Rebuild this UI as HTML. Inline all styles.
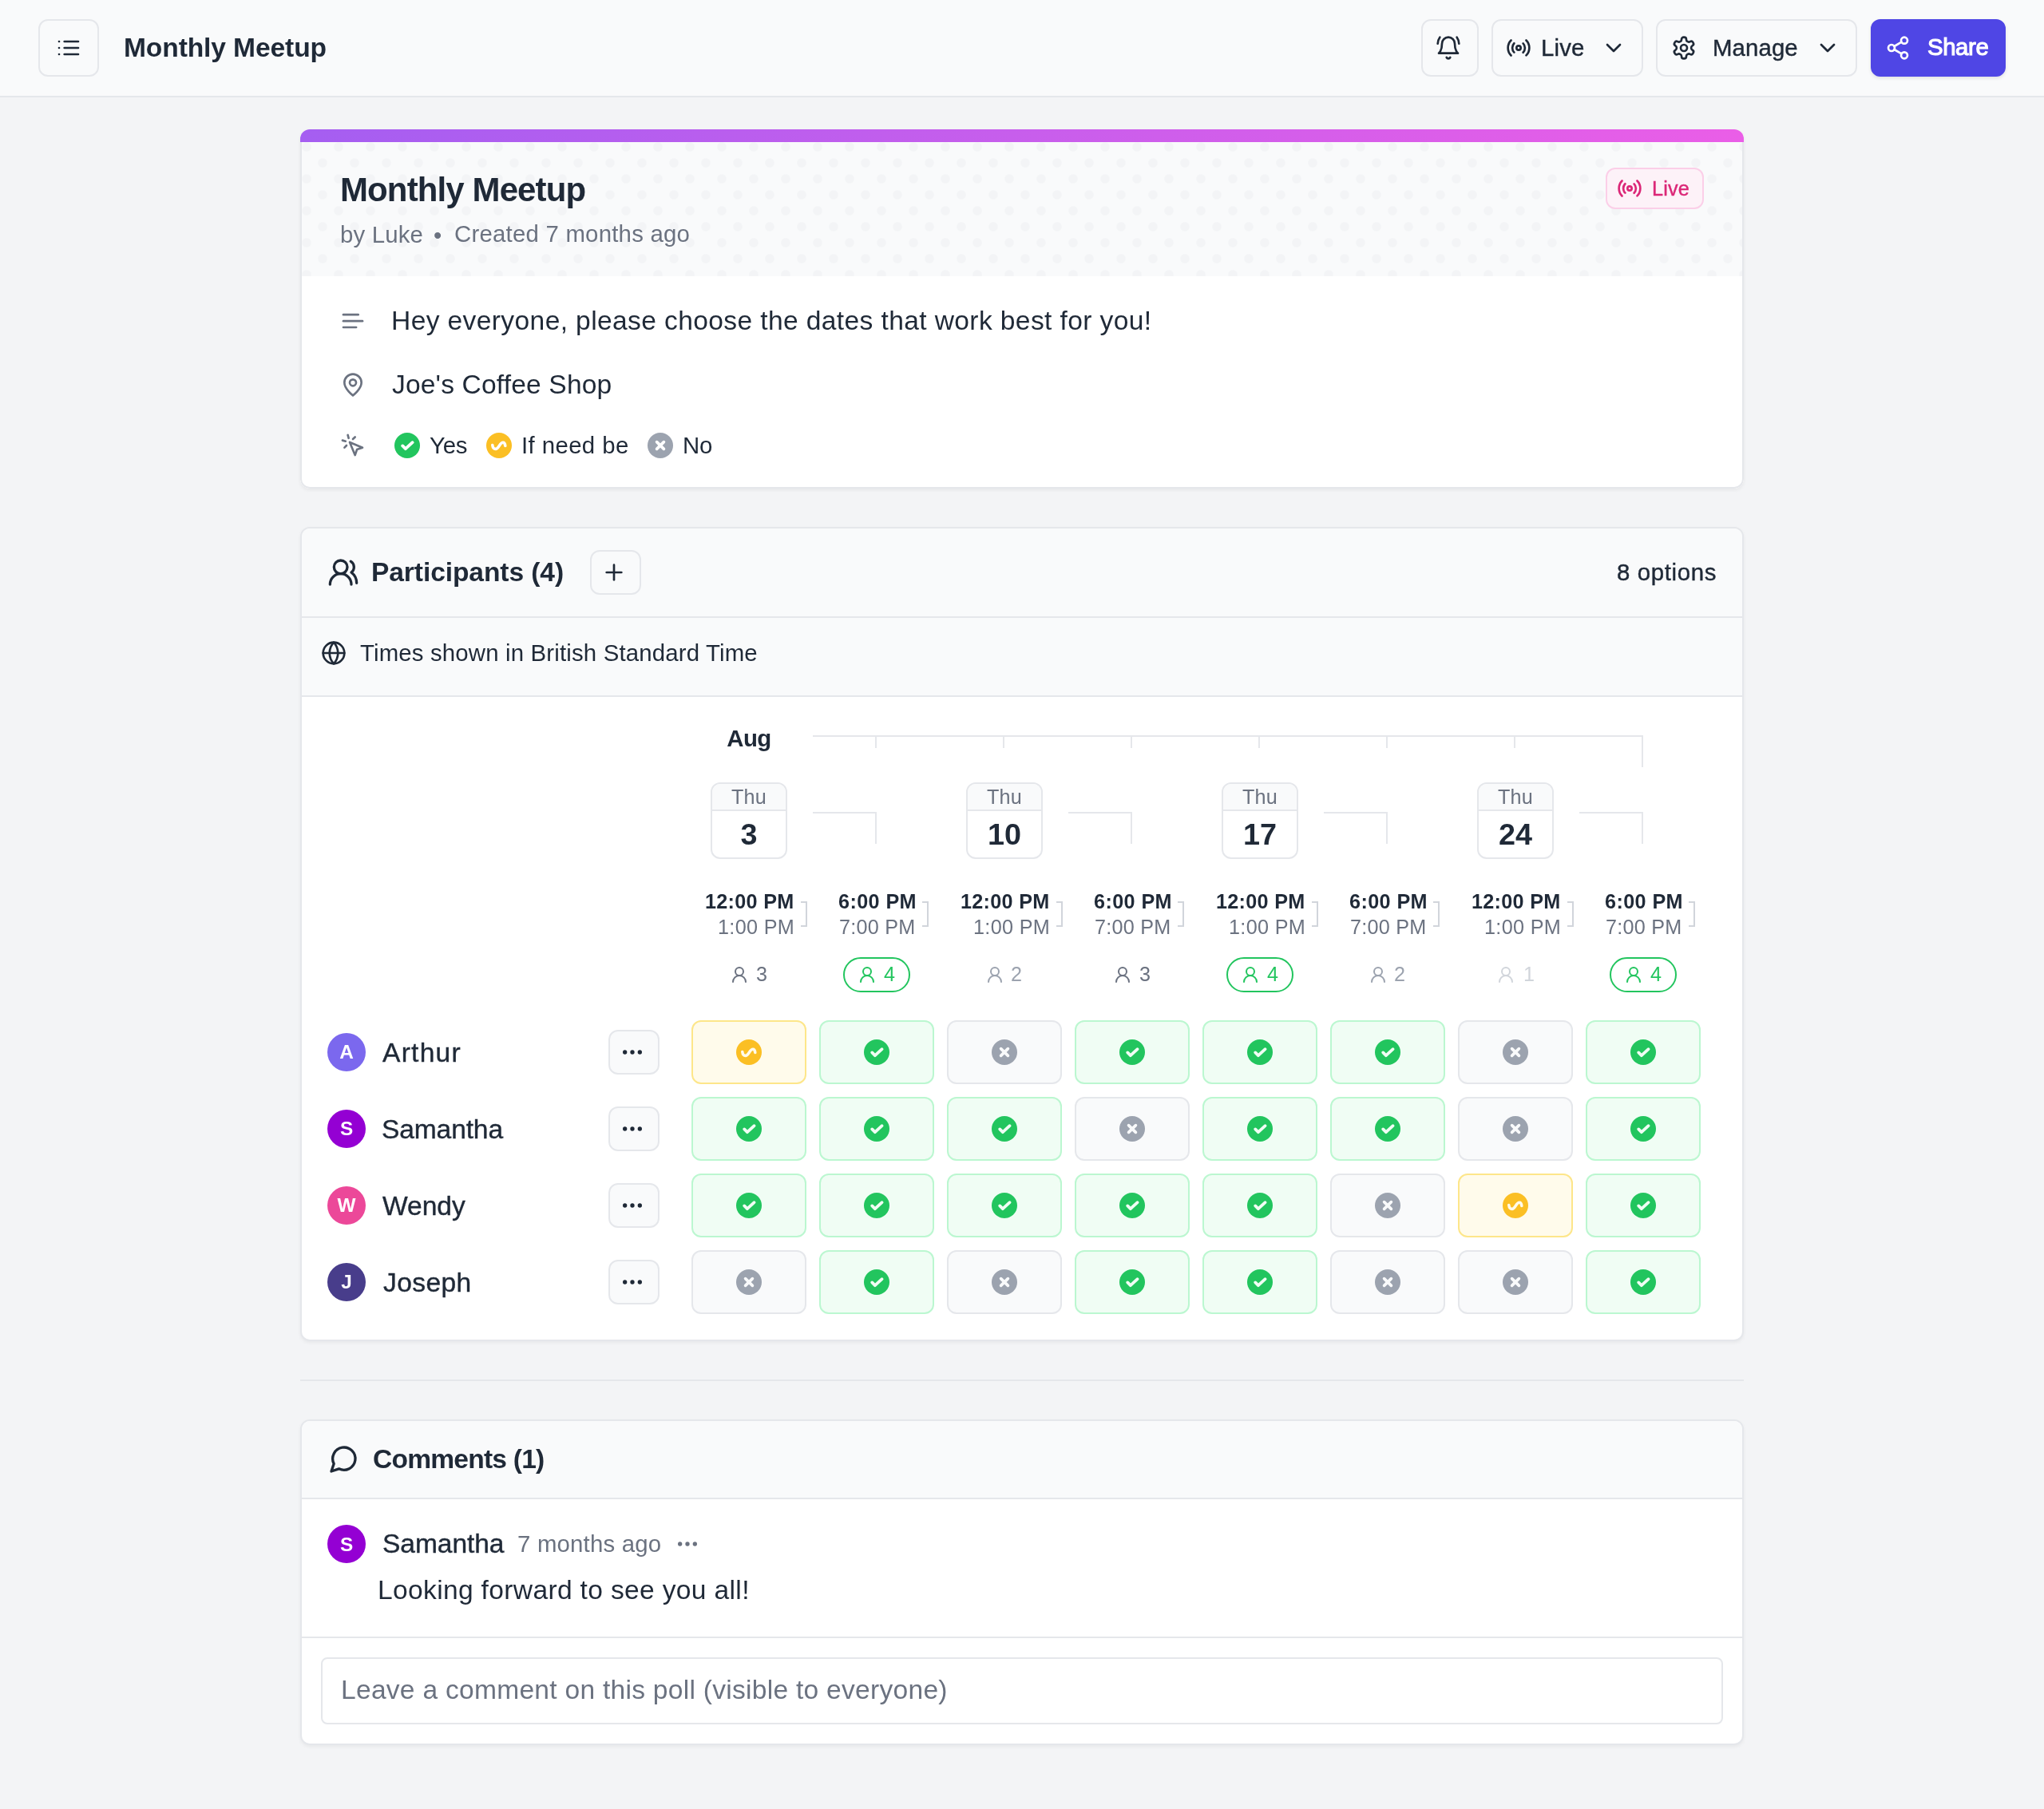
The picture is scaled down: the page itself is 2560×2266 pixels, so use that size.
<!DOCTYPE html><html lang="en"><head><meta charset="utf-8"><title>Monthly Meetup</title><style>
*{box-sizing:border-box}
html,body{margin:0;padding:0}
body{width:2560px;height:2266px;overflow:hidden;background:#f3f4f6;font-family:"Liberation Sans",sans-serif;color:#1f2937;position:relative}
.a{position:absolute}
svg{display:block}
.t{position:absolute;white-space:nowrap;line-height:1;will-change:transform}
.b{font-weight:bold}
.g5{color:#6b7280}
.m{-webkit-text-stroke:0.4px currentColor}
.sb{-webkit-text-stroke:1.1px currentColor}
.box{position:absolute;border:2px solid #e5e7eb;border-radius:12px;background:#f9fafb}
.cell{position:absolute;width:144px;height:80px;border:2px solid;border-radius:12px}
.cy{background:#f0fdf4;border-color:#bbf7d0}
.ci{background:#fffbeb;border-color:#fde68a}
.cn{background:#f9fafb;border-color:#e5e7eb}
.av{position:absolute;width:48px;height:48px;border-radius:50%}
.ln{position:absolute;background:#e5e7eb}
</style></head><body>
<div class="a" style="left:0;top:0;width:2560px;height:122px;background:#f9fafb;border-bottom:2px solid #e5e7eb"></div>
<div class="box" style="left:48px;top:24px;width:76px;height:72px;"></div>
<div class="a" style="left:70px;top:44px;color:#1f2937"><svg width="32" height="32" viewBox="0 0 24 24" fill="none" stroke="currentColor" stroke-width="2" stroke-linecap="round" stroke-linejoin="round"><line x1="8" x2="21" y1="6" y2="6"/><line x1="8" x2="21" y1="12" y2="12"/><line x1="8" x2="21" y1="18" y2="18"/><line x1="3" x2="3.01" y1="6" y2="6"/><line x1="3" x2="3.01" y1="12" y2="12"/><line x1="3" x2="3.01" y1="18" y2="18"/></svg></div>
<div class="t b" id="htitle" style="left:155px;top:42.5px;font-size:33.6px;letter-spacing:-0.115px;">Monthly Meetup</div>
<div class="box" style="left:1780px;top:24px;width:72px;height:72px;"></div>
<div class="a" style="left:1798px;top:44px;color:#1f2937"><svg width="32" height="32" viewBox="0 0 24 24" fill="none" stroke="currentColor" stroke-width="2" stroke-linecap="round" stroke-linejoin="round"><path d="M6 8a6 6 0 0 1 12 0c0 7 3 9 3 9H3s3-2 3-9"/><path d="M10.3 21a1.94 1.94 0 0 0 3.4 0"/><path d="M4 2C2.8 3.7 2 5.7 2 8"/><path d="M22 8c0-2.3-.8-4.3-2-6"/></svg></div>
<div class="box" style="left:1868px;top:24px;width:190px;height:72px;"></div>
<div class="a" style="left:1886px;top:44px;color:#1f2937"><svg width="32" height="32" viewBox="0 0 24 24" fill="none" stroke="currentColor" stroke-width="2" stroke-linecap="round" stroke-linejoin="round"><path d="M4.9 19.1C1 15.2 1 8.8 4.9 4.9"/><path d="M7.8 16.2c-2.3-2.3-2.3-6.1 0-8.5"/><circle cx="12" cy="12" r="2"/><path d="M16.2 7.8c2.3 2.3 2.3 6.1 0 8.5"/><path d="M19.1 4.9C23 8.8 23 15.1 19.1 19"/></svg></div>
<div class="t m" id="blive" style="left:1930px;top:44.6px;font-size:29.4px;letter-spacing:0.167px;">Live</div>
<div class="a" style="left:2005px;top:44px;color:#1f2937"><svg width="32" height="32" viewBox="0 0 24 24" fill="none" stroke="currentColor" stroke-width="2" stroke-linecap="round" stroke-linejoin="round"><path d="m6 9 6 6 6-6"/></svg></div>
<div class="box" style="left:2074px;top:24px;width:252px;height:72px;"></div>
<div class="a" style="left:2093px;top:44px;color:#1f2937"><svg width="32" height="32" viewBox="0 0 24 24" fill="none" stroke="currentColor" stroke-width="2" stroke-linecap="round" stroke-linejoin="round"><path d="M12.22 2h-.44a2 2 0 0 0-2 2v.18a2 2 0 0 1-1 1.73l-.43.25a2 2 0 0 1-2 0l-.15-.08a2 2 0 0 0-2.73.73l-.22.38a2 2 0 0 0 .73 2.73l.15.1a2 2 0 0 1 1 1.72v.51a2 2 0 0 1-1 1.74l-.15.09a2 2 0 0 0-.73 2.73l.22.38a2 2 0 0 0 2.73.73l.15-.08a2 2 0 0 1 2 0l.43.25a2 2 0 0 1 1 1.73V20a2 2 0 0 0 2 2h.44a2 2 0 0 0 2-2v-.18a2 2 0 0 1 1-1.73l.43-.25a2 2 0 0 1 2 0l.15.08a2 2 0 0 0 2.73-.73l.22-.39a2 2 0 0 0-.73-2.73l-.15-.08a2 2 0 0 1-1-1.74v-.5a2 2 0 0 1 1-1.74l.15-.09a2 2 0 0 0 .73-2.73l-.22-.38a2 2 0 0 0-2.73-.73l-.15.08a2 2 0 0 1-2 0l-.43-.25a2 2 0 0 1-1-1.73V4a2 2 0 0 0-2-2z"/><circle cx="12" cy="12" r="3"/></svg></div>
<div class="t m" id="bman" style="left:2145px;top:44.6px;font-size:29.4px;letter-spacing:0.1px;">Manage</div>
<div class="a" style="left:2273px;top:44px;color:#1f2937"><svg width="32" height="32" viewBox="0 0 24 24" fill="none" stroke="currentColor" stroke-width="2" stroke-linecap="round" stroke-linejoin="round"><path d="m6 9 6 6 6-6"/></svg></div>
<div class="box" style="left:2343px;top:24px;width:169px;height:72px;background:#4f46e5;border-color:#4f46e5;box-shadow:0 2px 4px rgba(0,0,0,.1)"></div>
<div class="a" style="left:2361px;top:44px;color:#fff"><svg width="32" height="32" viewBox="0 0 24 24" fill="none" stroke="currentColor" stroke-width="2" stroke-linecap="round" stroke-linejoin="round"><circle cx="18" cy="5" r="3"/><circle cx="6" cy="12" r="3"/><circle cx="18" cy="19" r="3"/><line x1="8.59" x2="15.42" y1="13.51" y2="17.49"/><line x1="15.41" x2="8.59" y1="6.51" y2="10.49"/></svg></div>
<div class="t sb" id="bshare" style="left:2413.8px;top:44px;font-size:29.4px;letter-spacing:-0.425px;color:#fff">Share</div>
<div class="a" style="left:376px;top:162px;width:1808px;height:450px;border-radius:12px;overflow:hidden;background:#fff;box-shadow:0 2px 4px rgba(0,0,0,.06)"><div class="a" style="left:0;top:0;width:1808px;height:16px;background:linear-gradient(90deg,#a55ef1,#ea5ee7)"></div><div class="a" style="left:0;top:16px;width:1808px;height:434px;border:2px solid #e5e7eb;border-top:0;border-radius:0 0 12px 12px"></div><div class="a" style="left:2px;top:16px;width:1804px;height:168px;background-color:#f9fafb;background-image:radial-gradient(circle at 6px 6px,#f3f4f6 5px,rgba(243,244,246,0) 6.5px),radial-gradient(circle at 26px 26px,#f3f4f6 5px,rgba(243,244,246,0) 6.5px);background-size:40px 40px"></div></div>
<div class="t b" id="ctitle" style="left:425.5px;top:217px;font-size:42px;letter-spacing:-0.886px;">Monthly Meetup</div>
<div class="t g5" id="csub1" style="left:426px;top:279px;font-size:29.4px;letter-spacing:0.167px;">by Luke</div>
<div class="t g5" id="csubd" style="left:543px;top:280px;font-size:29.4px;letter-spacing:0px;">•</div>
<div class="t g5" id="csub2" style="left:568.8px;top:278.4px;font-size:29.4px;letter-spacing:0.216px;">Created 7 months ago</div>
<div class="box" style="left:2011px;top:210px;width:123px;height:52px;border-color:#fbcfe8;border-radius:12px;background:#fdf2f8"></div>
<div class="a" style="left:2024.5px;top:220px;color:#db2777"><svg width="32" height="32" viewBox="0 0 24 24" fill="none" stroke="currentColor" stroke-width="2" stroke-linecap="round" stroke-linejoin="round"><path d="M4.9 19.1C1 15.2 1 8.8 4.9 4.9"/><path d="M7.8 16.2c-2.3-2.3-2.3-6.1 0-8.5"/><circle cx="12" cy="12" r="2"/><path d="M16.2 7.8c2.3 2.3 2.3 6.1 0 8.5"/><path d="M19.1 4.9C23 8.8 23 15.1 19.1 19"/></svg></div>
<div class="t m" id="badge" style="left:2069.3px;top:224px;font-size:25.2px;letter-spacing:0.166px;color:#db2777">Live</div>
<div class="a" style="left:426px;top:386px;color:#6b7280"><svg width="32" height="32" viewBox="0 0 24 24" fill="none" stroke="currentColor" stroke-width="2" stroke-linecap="round" stroke-linejoin="round"><path d="M17 6.1H3"/><path d="M21 12.1H3"/><path d="M15.1 18H3"/></svg></div>
<div class="t " id="desc" style="left:489.5px;top:385px;font-size:33.6px;letter-spacing:0.376px;">Hey everyone, please choose the dates that work best for you!</div>
<div class="a" style="left:426px;top:466px;color:#6b7280"><svg width="32" height="32" viewBox="0 0 24 24" fill="none" stroke="currentColor" stroke-width="2" stroke-linecap="round" stroke-linejoin="round"><path d="M20 10c0 6-8 12-8 12s-8-6-8-12a8 8 0 0 1 16 0Z"/><circle cx="12" cy="10" r="3"/></svg></div>
<div class="t " id="loc" style="left:491px;top:465px;font-size:33.6px;letter-spacing:0.157px;">Joe's Coffee Shop</div>
<div class="a" style="left:426px;top:542px;color:#6b7280"><svg width="32" height="32" viewBox="0 0 24 24" fill="none" stroke="currentColor" stroke-width="2" stroke-linecap="round" stroke-linejoin="round"><path d="m9 9 5 12 1.8-5.2L21 14Z"/><path d="M7.2 2.2 8 5.1"/><path d="m5.1 8-2.9-.8"/><path d="M14 4.1 12 6"/><path d="m6 12-1.9 2"/></svg></div>
<div class="a" style="left:494px;top:542px"><svg width="32" height="32" viewBox="0 0 32 32"><circle cx="16" cy="16" r="16" fill="#22c55e"/><path d="M10.2 16.4L13.9 20.2L22.6 12.2" fill="none" stroke="#fff" stroke-width="3.8" stroke-linecap="round" stroke-linejoin="round"/></svg></div>
<div class="t " id="lyes" style="left:538px;top:542.5px;font-size:29.4px;letter-spacing:-0.2px;">Yes</div>
<div class="a" style="left:609px;top:542px"><svg width="32" height="32" viewBox="0 0 32 32"><circle cx="16" cy="16" r="16" fill="#fbbf24"/><path d="M7.8 15.6C8.2 19 10 20.4 11.8 20.4C15.5 20.4 17 12.2 21 12.2C22.8 12.2 23.6 14.5 23.8 16.4" fill="none" stroke="#fff" stroke-width="3.6" stroke-linecap="round" stroke-linejoin="round"/></svg></div>
<div class="t " id="linb" style="left:652.5px;top:542.5px;font-size:29.4px;letter-spacing:0.39px;">If need be</div>
<div class="a" style="left:811px;top:542px"><svg width="32" height="32" viewBox="0 0 32 32"><circle cx="16" cy="16" r="16" fill="#9ca3af"/><path d="M11.6 11.6L20.4 20.4M20.4 11.6L11.6 20.4" fill="none" stroke="#fff" stroke-width="3.7" stroke-linecap="round"/></svg></div>
<div class="t " id="lno" style="left:854.6px;top:542.5px;font-size:29.4px;letter-spacing:-0.2px;">No</div>
<div class="a" style="left:376px;top:660px;width:1808px;height:1020px;border:2px solid #e5e7eb;border-radius:12px;overflow:hidden;background:#fff;box-shadow:0 2px 4px rgba(0,0,0,.05)"><div class="a" style="left:0;top:0;width:1804px;height:112px;background:#f9fafb;border-bottom:2px solid #e5e7eb"></div><div class="a" style="left:0;top:112px;width:1804px;height:99px;background:#f9fafb;border-bottom:2px solid #e5e7eb"></div></div>
<div class="a" style="left:410px;top:697px;color:#1f2937"><svg width="40" height="40" viewBox="0 0 24 24" fill="none" stroke="currentColor" stroke-width="2" stroke-linecap="round" stroke-linejoin="round"><path d="M18 21a8 8 0 0 0-16 0"/><circle cx="10" cy="8" r="5"/><path d="M22 20c0-3.37-2-6.5-4-8a5 5 0 0 0-.45-8.3"/></svg></div>
<div class="t b" id="ptitle" style="left:465px;top:700px;font-size:33.6px;letter-spacing:-0.101px;">Participants (4)</div>
<div class="box" style="left:739px;top:689px;width:64px;height:56px;"></div>
<div class="a" style="left:753px;top:701px;color:#1f2937"><svg width="32" height="32" viewBox="0 0 24 24" fill="none" stroke="currentColor" stroke-width="2" stroke-linecap="round" stroke-linejoin="round"><path d="M5 12h14"/><path d="M12 5v14"/></svg></div>
<div class="t m" id="opts" style="right:409.6px;top:701.5px;font-size:29.4px;letter-spacing:0.65px;">8 options</div>
<div class="a" style="left:402px;top:802px;color:#1f2937"><svg width="32" height="32" viewBox="0 0 24 24" fill="none" stroke="currentColor" stroke-width="2" stroke-linecap="round" stroke-linejoin="round"><circle cx="12" cy="12" r="10"/><line x1="2" x2="22" y1="12" y2="12"/><path d="M12 2a15.3 15.3 0 0 1 4 10 15.3 15.3 0 0 1-4 10 15.3 15.3 0 0 1-4-10 15.3 15.3 0 0 1 4-10z"/></svg></div>
<div class="t " id="tz" style="left:451px;top:802.5px;font-size:29.4px;letter-spacing:0.156px;">Times shown in British Standard Time</div>
<div class="t b" id="aug" style="left:866px;top:910px;font-size:29.4px;letter-spacing:-0.5px;width:144px;text-align:center">Aug</div>
<div class="ln" style="left:1018px;top:921px;width:1040px;height:2px"></div>
<div class="ln" style="left:1096px;top:921px;width:2px;height:16px"></div>
<div class="ln" style="left:1256px;top:921px;width:2px;height:16px"></div>
<div class="ln" style="left:1416px;top:921px;width:2px;height:16px"></div>
<div class="ln" style="left:1576px;top:921px;width:2px;height:16px"></div>
<div class="ln" style="left:1736px;top:921px;width:2px;height:16px"></div>
<div class="ln" style="left:1896px;top:921px;width:2px;height:16px"></div>
<div class="ln" style="left:2056px;top:921px;width:2px;height:40px"></div>
<div class="a" style="left:890px;top:980px;width:96px;height:96px;border:2px solid #e5e7eb;border-radius:12px;background:#fff;overflow:hidden"><div style="height:34px;background:#f9fafb;border-bottom:2px solid #e5e7eb"></div></div>
<div class="t g5" id="thu0" style="left:890px;top:985.5px;font-size:25.2px;letter-spacing:0.2px;width:96px;text-align:center">Thu</div>
<div class="t b" id="day0" style="left:890px;top:1027px;font-size:37.8px;letter-spacing:0px;width:96px;text-align:center">3</div>
<div class="a" style="left:1018px;top:1017px;width:80px;height:40px;border-top:2px solid #e5e7eb;border-right:2px solid #e5e7eb"></div>
<div class="a" style="left:1210px;top:980px;width:96px;height:96px;border:2px solid #e5e7eb;border-radius:12px;background:#fff;overflow:hidden"><div style="height:34px;background:#f9fafb;border-bottom:2px solid #e5e7eb"></div></div>
<div class="t g5" id="thu1" style="left:1210px;top:985.5px;font-size:25.2px;letter-spacing:0.2px;width:96px;text-align:center">Thu</div>
<div class="t b" id="day1" style="left:1210px;top:1027px;font-size:37.8px;letter-spacing:0px;width:96px;text-align:center">10</div>
<div class="a" style="left:1338px;top:1017px;width:80px;height:40px;border-top:2px solid #e5e7eb;border-right:2px solid #e5e7eb"></div>
<div class="a" style="left:1530px;top:980px;width:96px;height:96px;border:2px solid #e5e7eb;border-radius:12px;background:#fff;overflow:hidden"><div style="height:34px;background:#f9fafb;border-bottom:2px solid #e5e7eb"></div></div>
<div class="t g5" id="thu2" style="left:1530px;top:985.5px;font-size:25.2px;letter-spacing:0.2px;width:96px;text-align:center">Thu</div>
<div class="t b" id="day2" style="left:1530px;top:1027px;font-size:37.8px;letter-spacing:0px;width:96px;text-align:center">17</div>
<div class="a" style="left:1658px;top:1017px;width:80px;height:40px;border-top:2px solid #e5e7eb;border-right:2px solid #e5e7eb"></div>
<div class="a" style="left:1850px;top:980px;width:96px;height:96px;border:2px solid #e5e7eb;border-radius:12px;background:#fff;overflow:hidden"><div style="height:34px;background:#f9fafb;border-bottom:2px solid #e5e7eb"></div></div>
<div class="t g5" id="thu3" style="left:1850px;top:985.5px;font-size:25.2px;letter-spacing:0.2px;width:96px;text-align:center">Thu</div>
<div class="t b" id="day3" style="left:1850px;top:1027px;font-size:37.8px;letter-spacing:0px;width:96px;text-align:center">24</div>
<div class="a" style="left:1978px;top:1017px;width:80px;height:40px;border-top:2px solid #e5e7eb;border-right:2px solid #e5e7eb"></div>
<div class="t b" id="tm1a0" style="left:882.6px;top:1116.5px;font-size:25.2px;letter-spacing:0.285px;">12:00 PM</div>
<div class="t g5" id="tm2a0" style="left:898.9px;top:1148.5px;font-size:25.2px;letter-spacing:0.333px;">1:00 PM</div>
<div class="a" style="left:1003px;top:1129px;width:8px;height:32px;border:2px solid #d1d5db;border-left:0"></div>
<div class="a" style="left:914px;top:1208.5px;color:#6b7280"><svg width="24" height="24" viewBox="0 0 24 24" fill="none" stroke="currentColor" stroke-width="2" stroke-linecap="round" stroke-linejoin="round"><circle cx="12" cy="8" r="5"/><path d="M20 21a8 8 0 1 0-16 0"/></svg></div>
<div class="t " id="cnt0" style="left:947.3px;top:1208px;font-size:25.2px;letter-spacing:0px;color:#6b7280">3</div>
<div class="t b" id="tm1b1" style="left:1050px;top:1116.5px;font-size:25.2px;letter-spacing:0.399px;">6:00 PM</div>
<div class="t g5" id="tm2b1" style="left:1050.6px;top:1148.5px;font-size:25.2px;letter-spacing:0.251px;">7:00 PM</div>
<div class="a" style="left:1155px;top:1129px;width:8px;height:32px;border:2px solid #d1d5db;border-left:0"></div>
<div class="a" style="left:1056px;top:1199px;width:84px;height:44px;border:2px solid #22c55e;border-radius:22px"></div>
<div class="a" style="left:1074px;top:1208.5px;color:#22c55e"><svg width="24" height="24" viewBox="0 0 24 24" fill="none" stroke="currentColor" stroke-width="2" stroke-linecap="round" stroke-linejoin="round"><circle cx="12" cy="8" r="5"/><path d="M20 21a8 8 0 1 0-16 0"/></svg></div>
<div class="t " id="cnt1" style="left:1106.5px;top:1208px;font-size:25.2px;letter-spacing:0px;color:#22c55e">4</div>
<div class="t b" id="tm1a2" style="left:1202.6px;top:1116.5px;font-size:25.2px;letter-spacing:0.285px;">12:00 PM</div>
<div class="t g5" id="tm2a2" style="left:1218.9px;top:1148.5px;font-size:25.2px;letter-spacing:0.333px;">1:00 PM</div>
<div class="a" style="left:1323px;top:1129px;width:8px;height:32px;border:2px solid #d1d5db;border-left:0"></div>
<div class="a" style="left:1234px;top:1208.5px;color:#9ca3af"><svg width="24" height="24" viewBox="0 0 24 24" fill="none" stroke="currentColor" stroke-width="2" stroke-linecap="round" stroke-linejoin="round"><circle cx="12" cy="8" r="5"/><path d="M20 21a8 8 0 1 0-16 0"/></svg></div>
<div class="t " id="cnt2" style="left:1265.6px;top:1208px;font-size:25.2px;letter-spacing:0px;color:#9ca3af">2</div>
<div class="t b" id="tm1b3" style="left:1370px;top:1116.5px;font-size:25.2px;letter-spacing:0.399px;">6:00 PM</div>
<div class="t g5" id="tm2b3" style="left:1370.6px;top:1148.5px;font-size:25.2px;letter-spacing:0.251px;">7:00 PM</div>
<div class="a" style="left:1475px;top:1129px;width:8px;height:32px;border:2px solid #d1d5db;border-left:0"></div>
<div class="a" style="left:1394px;top:1208.5px;color:#6b7280"><svg width="24" height="24" viewBox="0 0 24 24" fill="none" stroke="currentColor" stroke-width="2" stroke-linecap="round" stroke-linejoin="round"><circle cx="12" cy="8" r="5"/><path d="M20 21a8 8 0 1 0-16 0"/></svg></div>
<div class="t " id="cnt3" style="left:1427.3px;top:1208px;font-size:25.2px;letter-spacing:0px;color:#6b7280">3</div>
<div class="t b" id="tm1a4" style="left:1522.6px;top:1116.5px;font-size:25.2px;letter-spacing:0.285px;">12:00 PM</div>
<div class="t g5" id="tm2a4" style="left:1538.9px;top:1148.5px;font-size:25.2px;letter-spacing:0.333px;">1:00 PM</div>
<div class="a" style="left:1643px;top:1129px;width:8px;height:32px;border:2px solid #d1d5db;border-left:0"></div>
<div class="a" style="left:1536px;top:1199px;width:84px;height:44px;border:2px solid #22c55e;border-radius:22px"></div>
<div class="a" style="left:1554px;top:1208.5px;color:#22c55e"><svg width="24" height="24" viewBox="0 0 24 24" fill="none" stroke="currentColor" stroke-width="2" stroke-linecap="round" stroke-linejoin="round"><circle cx="12" cy="8" r="5"/><path d="M20 21a8 8 0 1 0-16 0"/></svg></div>
<div class="t " id="cnt4" style="left:1586.5px;top:1208px;font-size:25.2px;letter-spacing:0px;color:#22c55e">4</div>
<div class="t b" id="tm1b5" style="left:1690px;top:1116.5px;font-size:25.2px;letter-spacing:0.399px;">6:00 PM</div>
<div class="t g5" id="tm2b5" style="left:1690.6px;top:1148.5px;font-size:25.2px;letter-spacing:0.251px;">7:00 PM</div>
<div class="a" style="left:1795px;top:1129px;width:8px;height:32px;border:2px solid #d1d5db;border-left:0"></div>
<div class="a" style="left:1714px;top:1208.5px;color:#9ca3af"><svg width="24" height="24" viewBox="0 0 24 24" fill="none" stroke="currentColor" stroke-width="2" stroke-linecap="round" stroke-linejoin="round"><circle cx="12" cy="8" r="5"/><path d="M20 21a8 8 0 1 0-16 0"/></svg></div>
<div class="t " id="cnt5" style="left:1745.6px;top:1208px;font-size:25.2px;letter-spacing:0px;color:#9ca3af">2</div>
<div class="t b" id="tm1a6" style="left:1842.6px;top:1116.5px;font-size:25.2px;letter-spacing:0.285px;">12:00 PM</div>
<div class="t g5" id="tm2a6" style="left:1858.9px;top:1148.5px;font-size:25.2px;letter-spacing:0.333px;">1:00 PM</div>
<div class="a" style="left:1963px;top:1129px;width:8px;height:32px;border:2px solid #d1d5db;border-left:0"></div>
<div class="a" style="left:1874px;top:1208.5px;color:#d1d5db"><svg width="24" height="24" viewBox="0 0 24 24" fill="none" stroke="currentColor" stroke-width="2" stroke-linecap="round" stroke-linejoin="round"><circle cx="12" cy="8" r="5"/><path d="M20 21a8 8 0 1 0-16 0"/></svg></div>
<div class="t " id="cnt6" style="left:1908.3px;top:1208px;font-size:25.2px;letter-spacing:0px;color:#d1d5db">1</div>
<div class="t b" id="tm1b7" style="left:2010px;top:1116.5px;font-size:25.2px;letter-spacing:0.399px;">6:00 PM</div>
<div class="t g5" id="tm2b7" style="left:2010.6px;top:1148.5px;font-size:25.2px;letter-spacing:0.251px;">7:00 PM</div>
<div class="a" style="left:2115px;top:1129px;width:8px;height:32px;border:2px solid #d1d5db;border-left:0"></div>
<div class="a" style="left:2016px;top:1199px;width:84px;height:44px;border:2px solid #22c55e;border-radius:22px"></div>
<div class="a" style="left:2034px;top:1208.5px;color:#22c55e"><svg width="24" height="24" viewBox="0 0 24 24" fill="none" stroke="currentColor" stroke-width="2" stroke-linecap="round" stroke-linejoin="round"><circle cx="12" cy="8" r="5"/><path d="M20 21a8 8 0 1 0-16 0"/></svg></div>
<div class="t " id="cnt7" style="left:2066.5px;top:1208px;font-size:25.2px;letter-spacing:0px;color:#22c55e">4</div>
<div class="av" style="left:410px;top:1294px;background:#7b68ee"></div>
<div class="t b" id="ini0" style="left:410px;top:1306.2px;font-size:24.36px;letter-spacing:0px;width:48px;text-align:center;color:#fff">A</div>
<div class="t m" id="nm0" style="left:479.3px;top:1302px;font-size:33.6px;letter-spacing:1.24px;">Arthur</div>
<div class="box" style="left:762px;top:1290px;width:64px;height:56px;"></div>
<div class="a" style="left:776px;top:1302px;color:#1f2937"><svg width="32" height="32" viewBox="0 0 24 24" fill="none" stroke="currentColor" stroke-width="2" stroke-linecap="round" stroke-linejoin="round"><circle cx="12" cy="12" r="1"/><circle cx="19" cy="12" r="1"/><circle cx="5" cy="12" r="1"/></svg></div>
<div class="cell ci" style="left:866px;top:1278px"></div><div class="a" style="left:922px;top:1302px"><svg width="32" height="32" viewBox="0 0 32 32"><circle cx="16" cy="16" r="16" fill="#fbbf24"/><path d="M7.8 15.6C8.2 19 10 20.4 11.8 20.4C15.5 20.4 17 12.2 21 12.2C22.8 12.2 23.6 14.5 23.8 16.4" fill="none" stroke="#fffbeb" stroke-width="3.6" stroke-linecap="round" stroke-linejoin="round"/></svg></div>
<div class="cell cy" style="left:1026px;top:1278px"></div><div class="a" style="left:1082px;top:1302px"><svg width="32" height="32" viewBox="0 0 32 32"><circle cx="16" cy="16" r="16" fill="#22c55e"/><path d="M10.2 16.4L13.9 20.2L22.6 12.2" fill="none" stroke="#f0fdf4" stroke-width="3.8" stroke-linecap="round" stroke-linejoin="round"/></svg></div>
<div class="cell cn" style="left:1186px;top:1278px"></div><div class="a" style="left:1242px;top:1302px"><svg width="32" height="32" viewBox="0 0 32 32"><circle cx="16" cy="16" r="16" fill="#9ca3af"/><path d="M11.6 11.6L20.4 20.4M20.4 11.6L11.6 20.4" fill="none" stroke="#f9fafb" stroke-width="3.7" stroke-linecap="round"/></svg></div>
<div class="cell cy" style="left:1346px;top:1278px"></div><div class="a" style="left:1402px;top:1302px"><svg width="32" height="32" viewBox="0 0 32 32"><circle cx="16" cy="16" r="16" fill="#22c55e"/><path d="M10.2 16.4L13.9 20.2L22.6 12.2" fill="none" stroke="#f0fdf4" stroke-width="3.8" stroke-linecap="round" stroke-linejoin="round"/></svg></div>
<div class="cell cy" style="left:1506px;top:1278px"></div><div class="a" style="left:1562px;top:1302px"><svg width="32" height="32" viewBox="0 0 32 32"><circle cx="16" cy="16" r="16" fill="#22c55e"/><path d="M10.2 16.4L13.9 20.2L22.6 12.2" fill="none" stroke="#f0fdf4" stroke-width="3.8" stroke-linecap="round" stroke-linejoin="round"/></svg></div>
<div class="cell cy" style="left:1666px;top:1278px"></div><div class="a" style="left:1722px;top:1302px"><svg width="32" height="32" viewBox="0 0 32 32"><circle cx="16" cy="16" r="16" fill="#22c55e"/><path d="M10.2 16.4L13.9 20.2L22.6 12.2" fill="none" stroke="#f0fdf4" stroke-width="3.8" stroke-linecap="round" stroke-linejoin="round"/></svg></div>
<div class="cell cn" style="left:1826px;top:1278px"></div><div class="a" style="left:1882px;top:1302px"><svg width="32" height="32" viewBox="0 0 32 32"><circle cx="16" cy="16" r="16" fill="#9ca3af"/><path d="M11.6 11.6L20.4 20.4M20.4 11.6L11.6 20.4" fill="none" stroke="#f9fafb" stroke-width="3.7" stroke-linecap="round"/></svg></div>
<div class="cell cy" style="left:1986px;top:1278px"></div><div class="a" style="left:2042px;top:1302px"><svg width="32" height="32" viewBox="0 0 32 32"><circle cx="16" cy="16" r="16" fill="#22c55e"/><path d="M10.2 16.4L13.9 20.2L22.6 12.2" fill="none" stroke="#f0fdf4" stroke-width="3.8" stroke-linecap="round" stroke-linejoin="round"/></svg></div>
<div class="av" style="left:410px;top:1390px;background:#9400d3"></div>
<div class="t b" id="ini1" style="left:410px;top:1402.2px;font-size:24.36px;letter-spacing:0px;width:48px;text-align:center;color:#fff">S</div>
<div class="t m" id="nm1" style="left:478.3px;top:1398px;font-size:33.6px;letter-spacing:-0.144px;">Samantha</div>
<div class="box" style="left:762px;top:1386px;width:64px;height:56px;"></div>
<div class="a" style="left:776px;top:1398px;color:#1f2937"><svg width="32" height="32" viewBox="0 0 24 24" fill="none" stroke="currentColor" stroke-width="2" stroke-linecap="round" stroke-linejoin="round"><circle cx="12" cy="12" r="1"/><circle cx="19" cy="12" r="1"/><circle cx="5" cy="12" r="1"/></svg></div>
<div class="cell cy" style="left:866px;top:1374px"></div><div class="a" style="left:922px;top:1398px"><svg width="32" height="32" viewBox="0 0 32 32"><circle cx="16" cy="16" r="16" fill="#22c55e"/><path d="M10.2 16.4L13.9 20.2L22.6 12.2" fill="none" stroke="#f0fdf4" stroke-width="3.8" stroke-linecap="round" stroke-linejoin="round"/></svg></div>
<div class="cell cy" style="left:1026px;top:1374px"></div><div class="a" style="left:1082px;top:1398px"><svg width="32" height="32" viewBox="0 0 32 32"><circle cx="16" cy="16" r="16" fill="#22c55e"/><path d="M10.2 16.4L13.9 20.2L22.6 12.2" fill="none" stroke="#f0fdf4" stroke-width="3.8" stroke-linecap="round" stroke-linejoin="round"/></svg></div>
<div class="cell cy" style="left:1186px;top:1374px"></div><div class="a" style="left:1242px;top:1398px"><svg width="32" height="32" viewBox="0 0 32 32"><circle cx="16" cy="16" r="16" fill="#22c55e"/><path d="M10.2 16.4L13.9 20.2L22.6 12.2" fill="none" stroke="#f0fdf4" stroke-width="3.8" stroke-linecap="round" stroke-linejoin="round"/></svg></div>
<div class="cell cn" style="left:1346px;top:1374px"></div><div class="a" style="left:1402px;top:1398px"><svg width="32" height="32" viewBox="0 0 32 32"><circle cx="16" cy="16" r="16" fill="#9ca3af"/><path d="M11.6 11.6L20.4 20.4M20.4 11.6L11.6 20.4" fill="none" stroke="#f9fafb" stroke-width="3.7" stroke-linecap="round"/></svg></div>
<div class="cell cy" style="left:1506px;top:1374px"></div><div class="a" style="left:1562px;top:1398px"><svg width="32" height="32" viewBox="0 0 32 32"><circle cx="16" cy="16" r="16" fill="#22c55e"/><path d="M10.2 16.4L13.9 20.2L22.6 12.2" fill="none" stroke="#f0fdf4" stroke-width="3.8" stroke-linecap="round" stroke-linejoin="round"/></svg></div>
<div class="cell cy" style="left:1666px;top:1374px"></div><div class="a" style="left:1722px;top:1398px"><svg width="32" height="32" viewBox="0 0 32 32"><circle cx="16" cy="16" r="16" fill="#22c55e"/><path d="M10.2 16.4L13.9 20.2L22.6 12.2" fill="none" stroke="#f0fdf4" stroke-width="3.8" stroke-linecap="round" stroke-linejoin="round"/></svg></div>
<div class="cell cn" style="left:1826px;top:1374px"></div><div class="a" style="left:1882px;top:1398px"><svg width="32" height="32" viewBox="0 0 32 32"><circle cx="16" cy="16" r="16" fill="#9ca3af"/><path d="M11.6 11.6L20.4 20.4M20.4 11.6L11.6 20.4" fill="none" stroke="#f9fafb" stroke-width="3.7" stroke-linecap="round"/></svg></div>
<div class="cell cy" style="left:1986px;top:1374px"></div><div class="a" style="left:2042px;top:1398px"><svg width="32" height="32" viewBox="0 0 32 32"><circle cx="16" cy="16" r="16" fill="#22c55e"/><path d="M10.2 16.4L13.9 20.2L22.6 12.2" fill="none" stroke="#f0fdf4" stroke-width="3.8" stroke-linecap="round" stroke-linejoin="round"/></svg></div>
<div class="av" style="left:410px;top:1486px;background:#ec4899"></div>
<div class="t b" id="ini2" style="left:410px;top:1498.2px;font-size:24.36px;letter-spacing:0px;width:48px;text-align:center;color:#fff">W</div>
<div class="t m" id="nm2" style="left:479.3px;top:1494px;font-size:33.6px;letter-spacing:-0.05px;">Wendy</div>
<div class="box" style="left:762px;top:1482px;width:64px;height:56px;"></div>
<div class="a" style="left:776px;top:1494px;color:#1f2937"><svg width="32" height="32" viewBox="0 0 24 24" fill="none" stroke="currentColor" stroke-width="2" stroke-linecap="round" stroke-linejoin="round"><circle cx="12" cy="12" r="1"/><circle cx="19" cy="12" r="1"/><circle cx="5" cy="12" r="1"/></svg></div>
<div class="cell cy" style="left:866px;top:1470px"></div><div class="a" style="left:922px;top:1494px"><svg width="32" height="32" viewBox="0 0 32 32"><circle cx="16" cy="16" r="16" fill="#22c55e"/><path d="M10.2 16.4L13.9 20.2L22.6 12.2" fill="none" stroke="#f0fdf4" stroke-width="3.8" stroke-linecap="round" stroke-linejoin="round"/></svg></div>
<div class="cell cy" style="left:1026px;top:1470px"></div><div class="a" style="left:1082px;top:1494px"><svg width="32" height="32" viewBox="0 0 32 32"><circle cx="16" cy="16" r="16" fill="#22c55e"/><path d="M10.2 16.4L13.9 20.2L22.6 12.2" fill="none" stroke="#f0fdf4" stroke-width="3.8" stroke-linecap="round" stroke-linejoin="round"/></svg></div>
<div class="cell cy" style="left:1186px;top:1470px"></div><div class="a" style="left:1242px;top:1494px"><svg width="32" height="32" viewBox="0 0 32 32"><circle cx="16" cy="16" r="16" fill="#22c55e"/><path d="M10.2 16.4L13.9 20.2L22.6 12.2" fill="none" stroke="#f0fdf4" stroke-width="3.8" stroke-linecap="round" stroke-linejoin="round"/></svg></div>
<div class="cell cy" style="left:1346px;top:1470px"></div><div class="a" style="left:1402px;top:1494px"><svg width="32" height="32" viewBox="0 0 32 32"><circle cx="16" cy="16" r="16" fill="#22c55e"/><path d="M10.2 16.4L13.9 20.2L22.6 12.2" fill="none" stroke="#f0fdf4" stroke-width="3.8" stroke-linecap="round" stroke-linejoin="round"/></svg></div>
<div class="cell cy" style="left:1506px;top:1470px"></div><div class="a" style="left:1562px;top:1494px"><svg width="32" height="32" viewBox="0 0 32 32"><circle cx="16" cy="16" r="16" fill="#22c55e"/><path d="M10.2 16.4L13.9 20.2L22.6 12.2" fill="none" stroke="#f0fdf4" stroke-width="3.8" stroke-linecap="round" stroke-linejoin="round"/></svg></div>
<div class="cell cn" style="left:1666px;top:1470px"></div><div class="a" style="left:1722px;top:1494px"><svg width="32" height="32" viewBox="0 0 32 32"><circle cx="16" cy="16" r="16" fill="#9ca3af"/><path d="M11.6 11.6L20.4 20.4M20.4 11.6L11.6 20.4" fill="none" stroke="#f9fafb" stroke-width="3.7" stroke-linecap="round"/></svg></div>
<div class="cell ci" style="left:1826px;top:1470px"></div><div class="a" style="left:1882px;top:1494px"><svg width="32" height="32" viewBox="0 0 32 32"><circle cx="16" cy="16" r="16" fill="#fbbf24"/><path d="M7.8 15.6C8.2 19 10 20.4 11.8 20.4C15.5 20.4 17 12.2 21 12.2C22.8 12.2 23.6 14.5 23.8 16.4" fill="none" stroke="#fffbeb" stroke-width="3.6" stroke-linecap="round" stroke-linejoin="round"/></svg></div>
<div class="cell cy" style="left:1986px;top:1470px"></div><div class="a" style="left:2042px;top:1494px"><svg width="32" height="32" viewBox="0 0 32 32"><circle cx="16" cy="16" r="16" fill="#22c55e"/><path d="M10.2 16.4L13.9 20.2L22.6 12.2" fill="none" stroke="#f0fdf4" stroke-width="3.8" stroke-linecap="round" stroke-linejoin="round"/></svg></div>
<div class="av" style="left:410px;top:1582px;background:#483d8b"></div>
<div class="t b" id="ini3" style="left:410px;top:1594.2px;font-size:24.36px;letter-spacing:0px;width:48px;text-align:center;color:#fff">J</div>
<div class="t m" id="nm3" style="left:480px;top:1590px;font-size:33.6px;letter-spacing:0.4px;">Joseph</div>
<div class="box" style="left:762px;top:1578px;width:64px;height:56px;"></div>
<div class="a" style="left:776px;top:1590px;color:#1f2937"><svg width="32" height="32" viewBox="0 0 24 24" fill="none" stroke="currentColor" stroke-width="2" stroke-linecap="round" stroke-linejoin="round"><circle cx="12" cy="12" r="1"/><circle cx="19" cy="12" r="1"/><circle cx="5" cy="12" r="1"/></svg></div>
<div class="cell cn" style="left:866px;top:1566px"></div><div class="a" style="left:922px;top:1590px"><svg width="32" height="32" viewBox="0 0 32 32"><circle cx="16" cy="16" r="16" fill="#9ca3af"/><path d="M11.6 11.6L20.4 20.4M20.4 11.6L11.6 20.4" fill="none" stroke="#f9fafb" stroke-width="3.7" stroke-linecap="round"/></svg></div>
<div class="cell cy" style="left:1026px;top:1566px"></div><div class="a" style="left:1082px;top:1590px"><svg width="32" height="32" viewBox="0 0 32 32"><circle cx="16" cy="16" r="16" fill="#22c55e"/><path d="M10.2 16.4L13.9 20.2L22.6 12.2" fill="none" stroke="#f0fdf4" stroke-width="3.8" stroke-linecap="round" stroke-linejoin="round"/></svg></div>
<div class="cell cn" style="left:1186px;top:1566px"></div><div class="a" style="left:1242px;top:1590px"><svg width="32" height="32" viewBox="0 0 32 32"><circle cx="16" cy="16" r="16" fill="#9ca3af"/><path d="M11.6 11.6L20.4 20.4M20.4 11.6L11.6 20.4" fill="none" stroke="#f9fafb" stroke-width="3.7" stroke-linecap="round"/></svg></div>
<div class="cell cy" style="left:1346px;top:1566px"></div><div class="a" style="left:1402px;top:1590px"><svg width="32" height="32" viewBox="0 0 32 32"><circle cx="16" cy="16" r="16" fill="#22c55e"/><path d="M10.2 16.4L13.9 20.2L22.6 12.2" fill="none" stroke="#f0fdf4" stroke-width="3.8" stroke-linecap="round" stroke-linejoin="round"/></svg></div>
<div class="cell cy" style="left:1506px;top:1566px"></div><div class="a" style="left:1562px;top:1590px"><svg width="32" height="32" viewBox="0 0 32 32"><circle cx="16" cy="16" r="16" fill="#22c55e"/><path d="M10.2 16.4L13.9 20.2L22.6 12.2" fill="none" stroke="#f0fdf4" stroke-width="3.8" stroke-linecap="round" stroke-linejoin="round"/></svg></div>
<div class="cell cn" style="left:1666px;top:1566px"></div><div class="a" style="left:1722px;top:1590px"><svg width="32" height="32" viewBox="0 0 32 32"><circle cx="16" cy="16" r="16" fill="#9ca3af"/><path d="M11.6 11.6L20.4 20.4M20.4 11.6L11.6 20.4" fill="none" stroke="#f9fafb" stroke-width="3.7" stroke-linecap="round"/></svg></div>
<div class="cell cn" style="left:1826px;top:1566px"></div><div class="a" style="left:1882px;top:1590px"><svg width="32" height="32" viewBox="0 0 32 32"><circle cx="16" cy="16" r="16" fill="#9ca3af"/><path d="M11.6 11.6L20.4 20.4M20.4 11.6L11.6 20.4" fill="none" stroke="#f9fafb" stroke-width="3.7" stroke-linecap="round"/></svg></div>
<div class="cell cy" style="left:1986px;top:1566px"></div><div class="a" style="left:2042px;top:1590px"><svg width="32" height="32" viewBox="0 0 32 32"><circle cx="16" cy="16" r="16" fill="#22c55e"/><path d="M10.2 16.4L13.9 20.2L22.6 12.2" fill="none" stroke="#f0fdf4" stroke-width="3.8" stroke-linecap="round" stroke-linejoin="round"/></svg></div>
<div class="ln" style="left:376px;top:1728px;width:1808px;height:2px"></div>
<div class="a" style="left:376px;top:1778px;width:1808px;height:408px;border:2px solid #e5e7eb;border-radius:12px;overflow:hidden;background:#fff;box-shadow:0 2px 4px rgba(0,0,0,.05)"><div class="a" style="left:0;top:0;width:1804px;height:98px;background:#f9fafb;border-bottom:2px solid #e5e7eb"></div><div class="ln" style="left:0;top:270px;width:1804px;height:2px"></div></div>
<div class="a" style="left:410px;top:1808px;color:#1f2937"><svg width="40" height="40" viewBox="0 0 24 24" fill="none" stroke="currentColor" stroke-width="2" stroke-linecap="round" stroke-linejoin="round"><path d="m3 21 1.9-5.7a8.5 8.5 0 1 1 3.8 3.8z"/></svg></div>
<div class="t b" id="cmt" style="left:467px;top:1810.5px;font-size:33.6px;letter-spacing:-0.781px;">Comments (1)</div>
<div class="av" style="left:410px;top:1910px;background:#9400d3"></div>
<div class="t b" id="inic" style="left:410px;top:1923.3px;font-size:24.36px;letter-spacing:0px;width:48px;text-align:center;color:#fff">S</div>
<div class="t m" id="cname" style="left:478.5px;top:1917px;font-size:33.6px;letter-spacing:-0.084px;">Samantha</div>
<div class="t g5" id="cago" style="left:648px;top:1918.5px;font-size:29.4px;letter-spacing:0.183px;">7 months ago</div>
<div class="a" style="left:845px;top:1918px;color:#6b7280"><svg width="32" height="32" viewBox="0 0 24 24" fill="none" stroke="currentColor" stroke-width="2" stroke-linecap="round" stroke-linejoin="round"><circle cx="12" cy="12" r="1"/><circle cx="19" cy="12" r="1"/><circle cx="5" cy="12" r="1"/></svg></div>
<div class="t " id="ctext" style="left:473px;top:1975px;font-size:33.6px;letter-spacing:0.334px;">Looking forward to see you all!</div>
<div class="box" style="left:402px;top:2076px;width:1756px;height:84px;border-radius:8px;background:#fff"></div>
<div class="t g5" id="ph" style="left:427px;top:2099.5px;font-size:33.6px;letter-spacing:0.265px;">Leave a comment on this poll (visible to everyone)</div>
</body></html>
